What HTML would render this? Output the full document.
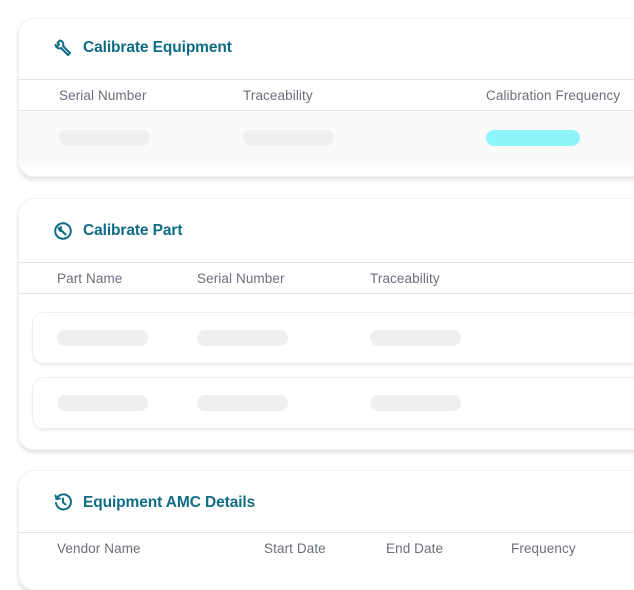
<!DOCTYPE html>
<html><head><style>
*{margin:0;padding:0;box-sizing:border-box}
body{width:634px;height:560px;background:#fff;position:relative;overflow:hidden;font-family:"Liberation Sans",sans-serif}
.card{position:absolute;left:18px;width:640px;background:#fff;border:1px solid #f3f3f3;border-radius:16px;box-shadow:0 3px 4px rgba(0,0,0,0.12);overflow:hidden}
.title{position:absolute;left:64px;font-size:15.5px;font-weight:bold;color:#0f6c85;letter-spacing:-0.1px}
.ic{position:absolute;left:35px}
.hl{position:absolute;left:0;right:0;height:1px;background:#e3e3e6}
.th{position:absolute;font-size:13.5px;color:#6b6f7b;letter-spacing:0.1px}
.pill{position:absolute;height:16px;width:91px;border-radius:8px;background:#efefef}
.row{position:absolute;left:13px;width:640px;height:52px;border:1px solid #eeeeee;border-radius:12px;background:#fff;box-shadow:0 2px 2px rgba(0,0,0,0.05)}
</style></head><body>

<div class="card" style="top:18px;height:159px">
 <svg class="ic" style="top:20px" width="18" height="18" viewBox="0 0 18 18" fill="none" stroke="#0f6c85" stroke-width="2" stroke-linejoin="round"><path d="M6 1.5 L3.5 4 L5 5.5 L3 7.5 L1.5 6 A4 4 0 0 0 7 9 L14 16 L16 14 L9 7 A4 4 0 0 0 6 1.5Z"/></svg>
 <div class="title" style="top:20px">Calibrate Equipment</div>
 <div class="hl" style="top:60px"></div>
 <div class="th" style="left:40px;top:69px">Serial Number</div>
 <div class="th" style="left:224px;top:69px">Traceability</div>
 <div class="th" style="left:467px;top:69px">Calibration Frequency</div>
 <div class="hl" style="top:91px"></div>
 <div style="position:absolute;left:0;right:0;top:92px;height:54px;background:#fafafa"></div>
 <div class="pill" style="left:40px;top:111px"></div>
 <div class="pill" style="left:224px;top:111px"></div>
 <div class="pill" style="left:467px;top:111px;width:94px;background:#8ff4fa"></div>
</div>

<div class="card" style="top:198px;height:252px">
 <svg class="ic" style="top:23px" width="18" height="18" viewBox="0 0 18 18" fill="none" stroke="#0f6c85" stroke-width="2"><circle cx="9" cy="9" r="7.8"/><path d="M7 5 L6 6 L7 7 L6 8 L5 7 A2.5 2.5 0 0 0 8 9 L11.5 12.5" stroke-linecap="round"/></svg>
 <div class="title" style="top:23px">Calibrate Part</div>
 <div class="hl" style="top:63px"></div>
 <div class="th" style="left:38px;top:72px">Part Name</div>
 <div class="th" style="left:178px;top:72px">Serial Number</div>
 <div class="th" style="left:351px;top:72px">Traceability</div>
 <div class="hl" style="top:94px"></div>
 <div class="row" style="top:113px"></div>
 <div class="row" style="top:178px"></div>
 <div class="pill" style="left:38px;top:131px"></div>
 <div class="pill" style="left:178px;top:131px"></div>
 <div class="pill" style="left:351px;top:131px"></div>
 <div class="pill" style="left:38px;top:196px"></div>
 <div class="pill" style="left:178px;top:196px"></div>
 <div class="pill" style="left:351px;top:196px"></div>
</div>

<div class="card" style="top:470px;height:120px">
 <svg class="ic" style="top:22px" width="18" height="18" viewBox="0 0 18 18" fill="none" stroke="#0f6c85" stroke-width="2" stroke-linecap="round"><path d="M2.5 6 A7.5 7.5 0 1 1 2 10"/><path d="M1.5 2.5 L2.5 6 L6 5.5"/><path d="M9 5.5 V9.5 L11.5 11.5"/></svg>
 <div class="title" style="top:23px">Equipment AMC Details</div>
 <div class="hl" style="top:61px"></div>
 <div class="th" style="left:38px;top:70px">Vendor Name</div>
 <div class="th" style="left:245px;top:70px">Start Date</div>
 <div class="th" style="left:367px;top:70px">End Date</div>
 <div class="th" style="left:492px;top:70px">Frequency</div>
</div>

</body></html>
